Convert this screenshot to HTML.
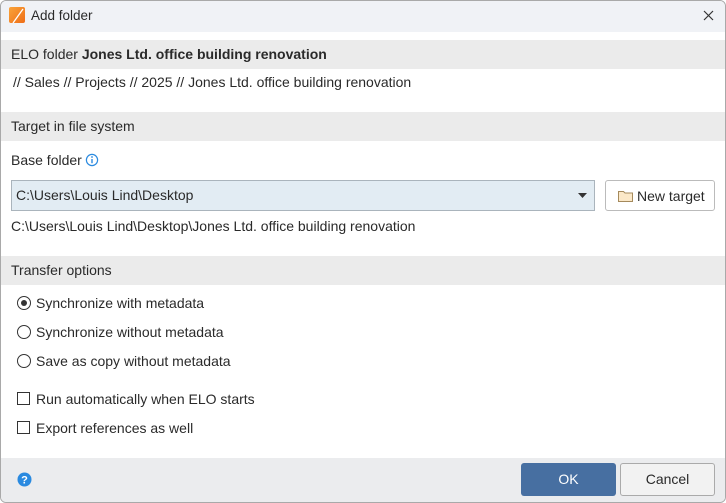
<!DOCTYPE html>
<html><head><style>
*{box-sizing:border-box;margin:0;padding:0}
body{width:726px;height:503px;overflow:hidden;font-family:"Liberation Sans",sans-serif;font-size:14px;color:#2a2a2a;background:#fff;position:relative}
.win{position:absolute;left:0;top:0;width:726px;height:503px;border:1px solid #a9a9a9;border-radius:6px;overflow:hidden;background:#fff}
.title{position:absolute;left:0;top:0;width:100%;height:31px;background:#f0f2f6}
.abs{position:absolute;white-space:nowrap}
.sec{position:absolute;left:0;width:100%;height:29px;background:#ebebeb;padding:6px 10px}
.radio{position:absolute;left:16px;width:14px;height:14px;border:1px solid #333;border-radius:50%}
.chk{position:absolute;left:16px;width:13px;height:13px;border:1px solid #333}
</style></head><body><div class="win">
<div class="title">
<div class="abs" style="left:8px;top:6px;width:16px;height:16px;background:linear-gradient(135deg,#f9a43b,#ef6d16);border-radius:2px"></div>
<svg class="abs" style="left:8px;top:6px" width="16" height="16"><path d="M4 16 L14 2" stroke="#fff" stroke-width="1.3"/></svg>
<div class="abs" style="left:30px;top:7px;font-size:13.5px">Add folder</div>
<svg class="abs" style="left:702px;top:9px" width="11" height="11"><path d="M1 1L10 10M10 1L1 10" stroke="#333" stroke-width="1.2"/></svg>
</div>
<div class="sec" style="top:39px">ELO folder <b>Jones Ltd. office building renovation</b></div>
<div class="abs" style="left:12px;top:73px">// Sales // Projects // 2025 // Jones Ltd. office building renovation</div>
<div class="sec" style="top:111px">Target in file system</div>
<div class="abs" style="left:10px;top:151px">Base folder</div>
<svg class="abs" style="left:84px;top:152px" width="14" height="14"><circle cx="7" cy="7" r="5.6" fill="none" stroke="#2a8ae0" stroke-width="1.2"/><path d="M7 6v4.2" stroke="#2a8ae0" stroke-width="1.4"/><circle cx="7" cy="4" r="0.9" fill="#2a8ae0"/></svg>
<div class="abs" style="left:10px;top:179px;width:584px;height:31px;background:#e2ecf3;border:1px solid #aab4bc;padding:6px 4px">C:\Users\Louis Lind\Desktop</div>
<svg class="abs" style="left:577px;top:192px" width="9" height="6"><path d="M0 0H9L4.5 5Z" fill="#333"/></svg>
<div class="abs" style="left:604px;top:179px;width:110px;height:31px;border:1px solid #bbb;border-radius:3px;background:#fff"></div>
<svg class="abs" style="left:617px;top:189px" width="15" height="12"><path d="M0.5 1.5H5.5L7 3H14.5V11.5H0.5Z" fill="#fbe8c8" stroke="#a58a5c"/></svg>
<div class="abs" style="left:636px;top:187px">New target</div>
<div class="abs" style="left:10px;top:217px">C:\Users\Louis Lind\Desktop\Jones Ltd. office building renovation</div>
<div class="sec" style="top:255px">Transfer options</div>
<div class="radio" style="top:295px"></div><div class="abs" style="left:20px;top:299px;width:6px;height:6px;border-radius:50%;background:#333"></div>
<div class="abs" style="left:35px;top:294px">Synchronize with metadata</div>
<div class="radio" style="top:324px"></div><div class="abs" style="left:35px;top:323px">Synchronize without metadata</div>
<div class="radio" style="top:353px"></div><div class="abs" style="left:35px;top:352px">Save as copy without metadata</div>
<div class="chk" style="top:391px"></div><div class="abs" style="left:35px;top:390px">Run automatically when ELO starts</div>
<div class="chk" style="top:420px"></div><div class="abs" style="left:35px;top:419px">Export references as well</div>
<div class="abs" style="left:0;top:457px;width:726px;height:46px;background:#ebecee"></div>
<svg class="abs" style="left:16px;top:471px" width="15" height="15"><circle cx="7.5" cy="7.5" r="7" fill="#2a8ae0"/><text x="7.5" y="11.5" font-size="11" font-weight="bold" fill="#fff" text-anchor="middle" font-family="Liberation Sans">?</text></svg>
<div class="abs" style="left:520px;top:462px;width:95px;height:33px;background:#476fa1;border-radius:3px;color:#fff;text-align:center;line-height:33px;font-size:14px">OK</div>
<div class="abs" style="left:619px;top:462px;width:95px;height:33px;background:#f2f2f2;border:1px solid #aaa;border-radius:3px;text-align:center;line-height:31px;font-size:14px">Cancel</div>
</div></body></html>
